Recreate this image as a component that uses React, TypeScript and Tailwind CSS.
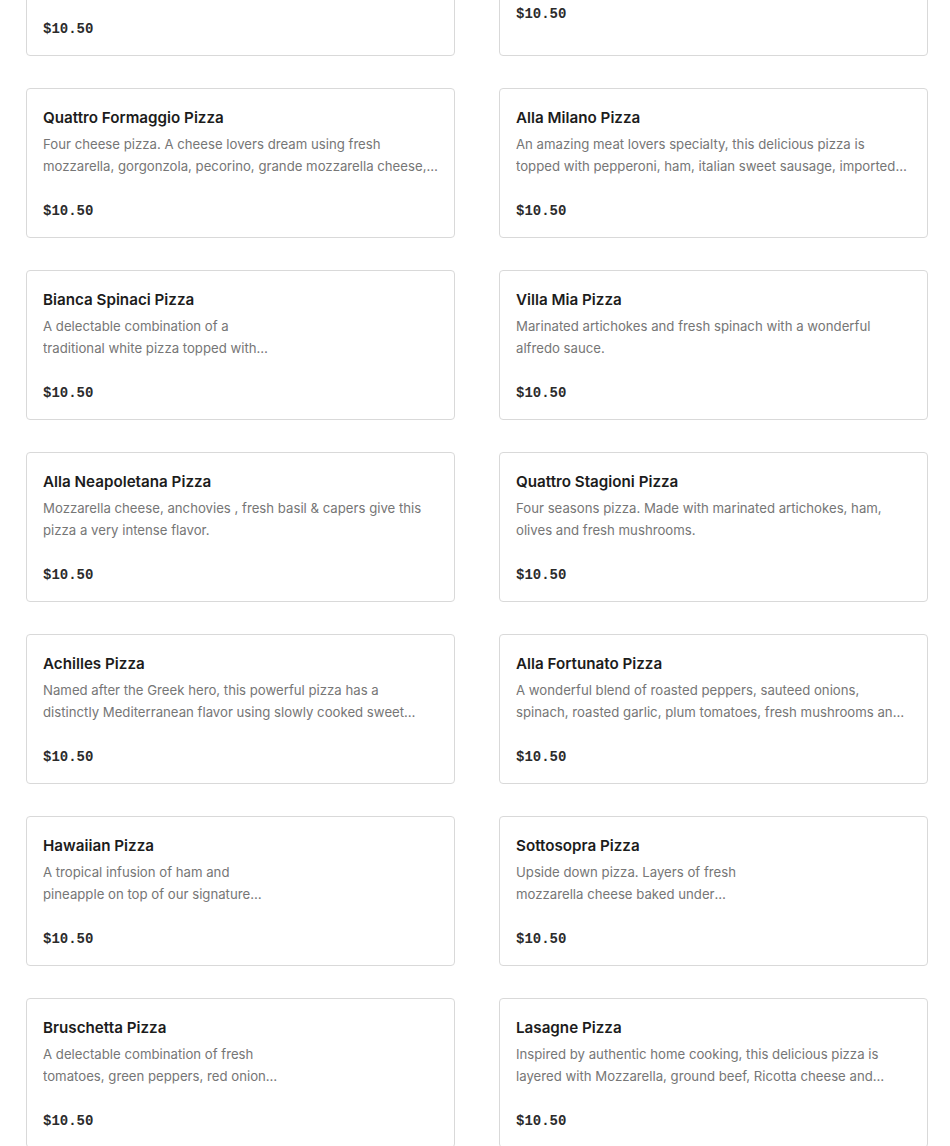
type Item = {
  name: string
  description: string
  narrow?: boolean
}

const items: Item[] = [
  {
    name: 'Margherita Pizza',
    description:
      'Classic pizza with fresh mozzarella, tomato sauce and fresh basil, finished with extra virgin olive oil.',
  },
  {
    name: 'Pizza Bianca',
    description: 'Mozzarella, ricotta and garlic.',
  },
  {
    name: 'Quattro Formaggio Pizza',
    description:
      'Four cheese pizza. A cheese lovers dream using fresh mozzarella, gorgonzola, pecorino, grande mozzarella cheese, and parmigiano reggiano.',
  },
  {
    name: 'Alla Milano Pizza',
    description:
      'An amazing meat lovers specialty, this delicious pizza is topped with pepperoni, ham, italian sweet sausage, imported prosciutto and bacon.',
  },
  {
    name: 'Bianca Spinaci Pizza',
    description:
      'A delectable combination of a traditional white pizza topped with fresh spinach and garlic.',
    narrow: true,
  },
  {
    name: 'Villa Mia Pizza',
    description: 'Marinated artichokes and fresh spinach with a wonderful alfredo sauce.',
  },
  {
    name: 'Alla Neapoletana Pizza',
    description:
      'Mozzarella cheese, anchovies , fresh basil & capers give this pizza a very intense flavor.',
  },
  {
    name: 'Quattro Stagioni Pizza',
    description: 'Four seasons pizza. Made with marinated artichokes, ham, olives and fresh mushrooms.',
  },
  {
    name: 'Achilles Pizza',
    description:
      'Named after the Greek hero, this powerful pizza has a distinctly Mediterranean flavor using slowly cooked sweet onions, feta and olives.',
  },
  {
    name: 'Alla Fortunato Pizza',
    description:
      'A wonderful blend of roasted peppers, sauteed onions, spinach, roasted garlic, plum tomatoes, fresh mushrooms and mozzarella.',
  },
  {
    name: 'Hawaiian Pizza',
    description:
      'A tropical infusion of ham and pineapple on top of our signature tomato sauce and mozzarella.',
    narrow: true,
  },
  {
    name: 'Sottosopra Pizza',
    description:
      'Upside down pizza. Layers of fresh mozzarella cheese baked under homemade tomato sauce.',
    narrow: true,
  },
  {
    name: 'Bruschetta Pizza',
    description:
      'A delectable combination of fresh tomatoes, green peppers, red onion and fresh basil.',
    narrow: true,
  },
  {
    name: 'Lasagne Pizza',
    description:
      'Inspired by authentic home cooking, this delicious pizza is layered with Mozzarella, ground beef, Ricotta cheese and tomato sauce.',
  },
]

function MenuCard({ item, first }: { item: Item; first?: 'left' | 'right' }) {
  return (
    <div className="flex flex-col rounded border border-[#d9d9d9] bg-white px-4 pt-[17px] pb-4">
      <h3 className="text-[15.2px] leading-6 font-semibold text-[#1c1c1c]">{item.name}</h3>
      <p
        className={
          'mt-[3px] line-clamp-2 text-[13.2px] leading-[22px] text-[#767676] ' +
          (item.narrow ? 'max-w-[244px]' : '')
        }
      >
        {item.description}
      </p>
      <p
        className={
          'font-["Liberation_Mono",monospace] text-sm leading-5 font-bold text-[#2b2b2b] ' +
          (first === 'right' ? 'mt-[31px]' : 'mt-6')
        }
      >
        $10.50
      </p>
    </div>
  )
}

export default function App() {
  return (
    <div className="h-[1146px] overflow-hidden bg-white font-['Inter',sans-serif]">
      <div className="-mt-[94px] ml-[26px] grid w-[902px] grid-cols-2 gap-x-[44px] gap-y-8">
        {items.map((item, i) => (
          <MenuCard
            key={item.name}
            item={item}
            first={i === 0 ? 'left' : i === 1 ? 'right' : undefined}
          />
        ))}
      </div>
    </div>
  )
}
